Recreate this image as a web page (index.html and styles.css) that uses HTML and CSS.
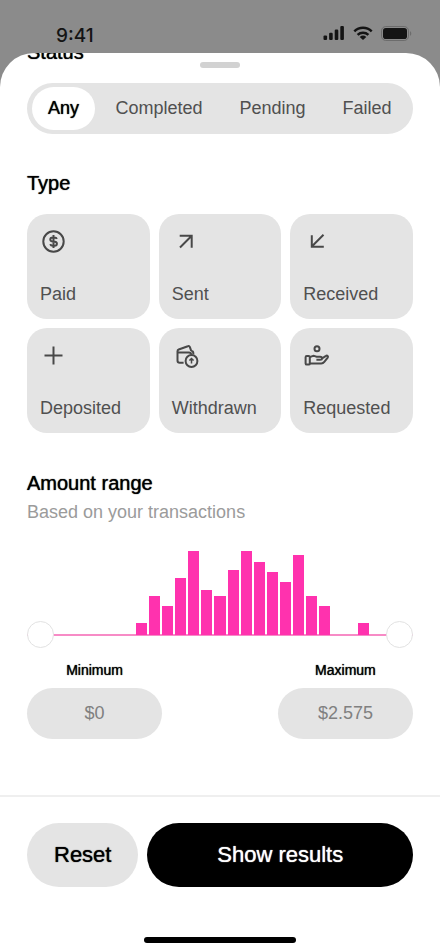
FILE: index.html
```html
<!DOCTYPE html>
<html lang="en">
<head>
<meta charset="utf-8">
<meta name="viewport" content="width=device-width, initial-scale=1">
<title>Filter transactions</title>
<link rel="stylesheet" href="styles.css">
</head>
<body>
<header class="status-bar">
  <time class="clock">9:41</time>
  <div class="indicators">
    <svg width="22" height="14" viewBox="0 0 22 14" aria-hidden="true"><g fill="#141414"><rect x="0.5" y="9.5" width="3.6" height="4.5" rx="1.1"/><rect x="6.1" y="6.8" width="3.6" height="7.2" rx="1.1"/><rect x="11.7" y="3.6" width="3.6" height="10.4" rx="1.1"/><rect x="17.3" y="0" width="3.6" height="14" rx="1.1"/></g></svg>
    <svg width="20" height="14" viewBox="0 0 20 14" aria-hidden="true"><g fill="none" stroke="#141414" stroke-width="2.5"><path d="M1.3 5.3a12.6 12.6 0 0 1 17.4 0"/><path d="M4.6 8.8a7.9 7.9 0 0 1 10.8 0"/></g><path fill="#141414" d="M6.7 10.9a5 5 0 0 1 6.6 0L10 14z"/></svg>
    <svg width="31" height="15" viewBox="0 0 31 15" aria-hidden="true"><rect x="0.5" y="0.5" width="27" height="14" rx="4.3" fill="none" stroke="#6c6c6c"/><rect x="2" y="2" width="24" height="11" rx="2.8" fill="#141414"/><path d="M29 5.2v4.6c1.7-.6 1.7-4 0-4.6z" fill="#6c6c6c"/></svg>
  </div>
</header>

<main class="sheet">
  <div class="grabber"></div>
  <form class="filters">
    <h2 class="heading heading-status" id="status-title">Status</h2>
    <div class="segments" role="group" aria-labelledby="status-title">
      <button type="button" class="segment segment-active" aria-pressed="true">Any</button>
      <button type="button" class="segment" aria-pressed="false">Completed</button>
      <button type="button" class="segment" aria-pressed="false">Pending</button>
      <button type="button" class="segment" aria-pressed="false">Failed</button>
    </div>

    <h2 class="heading heading-type" id="type-title">Type</h2>
    <div class="types" role="group" aria-labelledby="type-title">
      <button type="button" class="type">
        <svg class="icon" viewBox="0 0 27 27" aria-hidden="true"><circle cx="13.5" cy="13.5" r="10.2"/><path d="M13.5 7v13M16.900 10.900c-.4-1-1.300-1.500-2.400-1.500h-1.900c-1.300 0-2.300.9-2.300 2s.9 1.800 2.100 2l2.400.3c1.200.2 2.100.9 2.100 2s-1 2-2.300 2h-1.900c-1.200 0-2.100-.6-2.500-1.600"/></svg>
        <span>Paid</span>
      </button>
      <button type="button" class="type">
        <svg class="icon" viewBox="0 0 27 27" aria-hidden="true"><path d="M8 19.5L19.7 7.8M7.7 7.8h12v11.9"/></svg>
        <span>Sent</span>
      </button>
      <button type="button" class="type">
        <svg class="icon" viewBox="0 0 27 27" aria-hidden="true"><path d="M20.5 6.8L8.8 18.5M8.8 7.2v11.5h12"/></svg>
        <span>Received</span>
      </button>
      <button type="button" class="type">
        <svg class="icon" viewBox="0 0 27 27" aria-hidden="true"><path d="M13.5 4.5v18M4.5 13.5h18"/></svg>
        <span>Deposited</span>
      </button>
      <button type="button" class="type">
        <svg class="icon" viewBox="0 0 27 27" aria-hidden="true"><path d="M11.600 20.800H7.700c-1.300 0-2.200-.9-2.200-2.200V9.200M19.200 8.900c1.300 0 2.100.8 2.100 2.100v1.600M5.500 9.200c0 .8.700 1.400 1.600 1.400h9.800c1.300 0 2.200.8 2.200 2M5.500 9.200c0-.9.4-1.400 1.200-1.700l9.100-3.300c1-.4 1.800 0 2.100 1l1.300 3.700"/><circle cx="19.500" cy="19" r="5.900"/><path class="thin" d="M19.500 21.500v-4.700M17.400 18.500l2.100-2 2.100 2"/></svg>
        <span>Withdrawn</span>
      </button>
      <button type="button" class="type">
        <svg class="icon" viewBox="0 0 27 27" aria-hidden="true"><circle cx="14" cy="6.800" r="2.500"/><rect x="2.600" y="14" width="4.200" height="8.600" rx="1.200"/><path d="M6.800 15.200l2.600-1.100c.8-.3 1.600-.3 2.400 0l1.700.6h3.600c1.300 0 2 .6 2 1.500s-.8 1.500-2 1.500h-3.700M18.700 16.600l4.300-2.700c1.200-.8 2.600.5 1.700 1.700l-3.400 4.300c-.8 1-1.700 1.500-3 1.500H6.800"/></svg>
        <span>Requested</span>
      </button>
    </div>

    <h2 class="heading heading-amount">Amount range</h2>
    <p class="hint">Based on your transactions</p>
    <div class="range">
      <div class="bars" aria-hidden="true">
        <i style="height:0"></i><i style="height:0"></i><i style="height:0"></i><i style="height:0"></i><i style="height:0"></i><i style="height:0"></i>
        <i style="height:12px"></i><i style="height:39px"></i><i style="height:29px"></i><i style="height:57px"></i><i style="height:84px"></i><i style="height:45px"></i><i style="height:39px"></i><i style="height:65px"></i><i style="height:84px"></i><i style="height:73px"></i><i style="height:63px"></i><i style="height:53px"></i><i style="height:80px"></i><i style="height:39px"></i><i style="height:29px"></i>
        <i style="height:0"></i><i style="height:0"></i><i style="height:12px"></i><i style="height:0"></i>
      </div>
      <div class="sliders">
        <input class="slider" type="range" aria-label="Minimum amount" min="0" max="2575" value="0">
        <input class="slider" type="range" aria-label="Maximum amount" min="0" max="2575" value="2575">
      </div>
    </div>
    <div class="limits">
      <div class="limit">
        <label for="minimum">Minimum</label>
        <input id="minimum" type="text" inputmode="decimal" value="$0">
      </div>
      <div class="limit">
        <label for="maximum">Maximum</label>
        <input id="maximum" type="text" inputmode="decimal" value="$2.575">
      </div>
    </div>
  </form>
  <footer class="actions">
    <div class="action-row">
      <button type="button" class="action action-reset">Reset</button>
      <button type="button" class="action action-show">Show results</button>
    </div>
    <div class="home"></div>
  </footer>
</main>
</body>
</html>
```
FILE: styles.css
```css
* { box-sizing: border-box; }

body {
  margin: 0;
  min-height: 100vh;
  display: flex;
  flex-direction: column;
  background: #8b8b8b;
  color: #000;
  font-family: "Liberation Sans", Arial, sans-serif;
  font-size: 18px;
}

button, input { font: inherit; border: 0; }
button { cursor: pointer; }

/* The family has no medium weight; a soft shadow thickens the regular one. */
.heading, .segment-active, .limit label, .action {
  text-shadow: 0 0 1px currentColor;
}

.status-bar {
  height: 53px;
  padding: 14px 28px 0 56px;
  display: flex;
  justify-content: space-between;
}
.clock {
  padding-top: 10px;
  font: 500 19px/24px Inter, sans-serif;
  color: #141414;
}
.indicators {
  height: 38px;
  display: flex;
  align-items: center;
  gap: 8px;
}

.sheet {
  position: relative;
  flex: 1;
  display: flex;
  flex-direction: column;
  overflow: hidden;
  border-radius: 34px 34px 0 0;
  background: #fff;
}
.grabber {
  position: absolute;
  top: 9px;
  left: calc(50% - 20px);
  width: 40px;
  height: 6px;
  border-radius: 3px;
  background: #d2d2d2;
}
.filters {
  flex: 1;
  padding: 0 27px;
}

.heading {
  margin: 0;
  font-size: 20px;
  font-weight: 400;
  line-height: 24px;
}
.heading-status { margin-top: -13px; }
.heading-type { margin: 37px 0 19px; }
.heading-amount { margin-top: 38px; }

.segments {
  height: 51px;
  margin-top: 19px;
  padding: 4px 3px 4px 5px;
  display: flex;
  border-radius: 26px;
  background: #e4e4e4;
}
.segment {
  flex: auto;
  padding: 0 16px;
  border-radius: 22px;
  background: none;
  color: #505050;
}
.segment-active {
  flex: none;
  margin-right: 2px;
  background: #fff;
  color: #000;
}

.types {
  display: grid;
  grid-template-columns: repeat(3, 1fr);
  gap: 9px;
}
.type {
  height: 105px;
  padding: 14px 13px;
  display: flex;
  flex-direction: column;
  justify-content: space-between;
  align-items: flex-start;
  border-radius: 20px;
  background: #e4e4e4;
  color: #505050;
  line-height: 22px;
}
.icon {
  width: 27px;
  height: 27px;
  fill: none;
  stroke: #484848;
  stroke-width: 2;
}
.icon .thin { stroke-width: 1.5; }

.hint {
  margin: 5px 0 0;
  line-height: 24px;
  color: #9b9b9b;
}

.range { margin-top: 27px; }
.bars {
  height: 84px;
  padding: 0 31px;
  display: grid;
  grid-template-columns: repeat(25, 1fr);
  gap: 2px;
  align-items: end;
}
.bars i { background: #ff32ae; }

.sliders {
  height: 27px;
  margin-top: -14px;
  display: grid;
  align-items: center;
  background: linear-gradient(#f78bc6, #f78bc6) center / 100% 2px no-repeat;
}
.slider {
  grid-area: 1 / 1;
  width: 100%;
  height: 27px;
  margin: 0;
  appearance: none;
  background: none;
  pointer-events: none;
}
.slider::-webkit-slider-thumb {
  appearance: none;
  width: 27px;
  height: 27px;
  border: 1px solid #e2e2e2;
  border-radius: 50%;
  background: #fff;
  pointer-events: auto;
}

.limits {
  margin-top: 12px;
  display: flex;
  justify-content: space-between;
}
.limit {
  width: 35%;
  display: flex;
  flex-direction: column;
  gap: 8px;
  text-align: center;
}
.limit label {
  font-size: 14px;
  line-height: 20px;
}
.limit input {
  width: 100%;
  height: 51px;
  padding: 0 16px;
  border-radius: 26px;
  background: #e4e4e4;
  color: #808080;
  text-align: center;
}

.actions {
  padding: 26px 27px 9px;
  border-top: 2px solid #efefef;
}
.action-row {
  display: flex;
  gap: 9px;
}
.action {
  height: 64px;
  padding: 0 27px;
  border-radius: 32px;
  font-size: 22px;
}
.action-reset { background: #e4e4e4; color: #000; }
.action-show { flex: 1; background: #000; color: #fff; }
.home {
  width: 152px;
  height: 6px;
  margin: 50px auto 0;
  border-radius: 3px;
  background: #000;
}
```
